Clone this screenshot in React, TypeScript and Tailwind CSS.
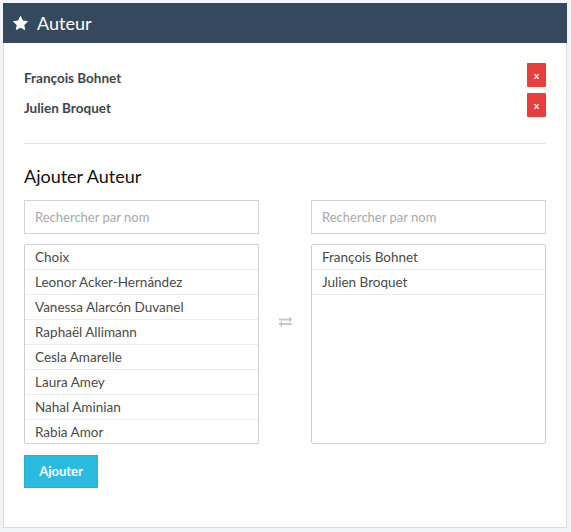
import React from 'react';

const selected = ['François Bohnet', 'Julien Broquet'];

const choices = [
  'Choix',
  'Leonor Acker-Hernández',
  'Vanessa Alarcón Duvanel',
  'Raphaël Allimann',
  'Cesla Amarelle',
  'Laura Amey',
  'Nahal Aminian',
  'Rabia Amor',
];

const StarIcon = () => (
  <svg width="17" height="16" viewBox="0 0 24 23" fill="white">
    <path d="M12 0.8l3.4 7 7.7 1.1-5.6 5.4 1.3 7.6L12 18.3l-6.8 3.6 1.3-7.6L0.9 8.9l7.7-1.1z" />
  </svg>
);

const SwapIcon = () => (
  <svg width="15" height="11" viewBox="0 0 15 11" fill="#c8c8c8">
    <rect x="1" y="2.5" width="11" height="2" />
    <path d="M11 0.5l3.5 3-3.5 3z" />
    <rect x="3" y="7" width="11" height="2" />
    <path d="M4 5l-3.5 3 3.5 3z" />
  </svg>
);

const App: React.FC = () => {
  return (
    <div className="w-[571px] h-[532px] bg-[#f3f4f6] p-[3px] pr-[4px] pb-[4px]" style={{ fontFamily: 'Lato, "Open Sans", sans-serif' }}>
      <div className="h-full bg-white border border-[#dcdcdc] border-t-0">
        {/* header */}
        <div className="h-[40px] bg-[#34495e] flex items-center pl-[9px] -mx-px">
          <StarIcon />
          <span className="ml-[8px] text-white text-[18px] leading-none">Auteur</span>
        </div>

        <div className="px-[20px] pt-[20px]">
          {/* auteurs sélectionnés */}
          {selected.map((name) => (
            <div key={name} className="flex items-center justify-between h-[24px] mb-[6px]">
              <span className="pt-[7px] text-[13.5px] font-bold text-[#3d4650]">{name}</span>
              <button className="w-[19px] h-[24px] bg-[#e83e3e] text-white text-[10px] font-bold leading-none rounded-[1px]">x</button>
            </div>
          ))}

          <div className="border-t border-[#e6e6e6] mt-[26px]"></div>

          <h3 className="mt-[19px] text-[18px] leading-[26px] text-[#111]">Ajouter Auteur</h3>

          <div className="mt-[11px] flex">
            {/* colonne gauche */}
            <div className="w-[235px]">
              <input
                className="w-full h-[34px] border border-[#d4d4d4] px-[10px] text-[13px] outline-none placeholder:text-[#a9a9a9]"
                placeholder="Rechercher par nom"
              />
              <div className="mt-[10px] h-[200px] border border-[#cfcfcf] rounded-[2px] overflow-hidden">
                {choices.map((c) => (
                  <div key={c} className="h-[25px] border-b border-[#ececec] px-[10px] flex items-center text-[13.5px] text-[#4a4a4a]">
                    {c}
                  </div>
                ))}
              </div>
            </div>

            <div className="w-[52px] flex justify-center pt-[116px]">
              <SwapIcon />
            </div>

            {/* colonne droite */}
            <div className="w-[235px]">
              <input
                className="w-full h-[34px] border border-[#d4d4d4] px-[10px] text-[13px] outline-none placeholder:text-[#a9a9a9]"
                placeholder="Rechercher par nom"
              />
              <div className="mt-[10px] h-[200px] border border-[#cfcfcf] rounded-[2px] overflow-hidden">
                {selected.map((c) => (
                  <div key={c} className="h-[25px] border-b border-[#ececec] px-[10px] flex items-center text-[13.5px] text-[#4a4a4a]">
                    {c}
                  </div>
                ))}
              </div>
            </div>
          </div>

          <button className="mt-[11px] h-[33px] w-[74px] bg-[#2bbbe0] border border-[#26b0d4] text-white text-[13px] font-bold">
            Ajouter
          </button>
        </div>
      </div>
    </div>
  );
};

export default App;
